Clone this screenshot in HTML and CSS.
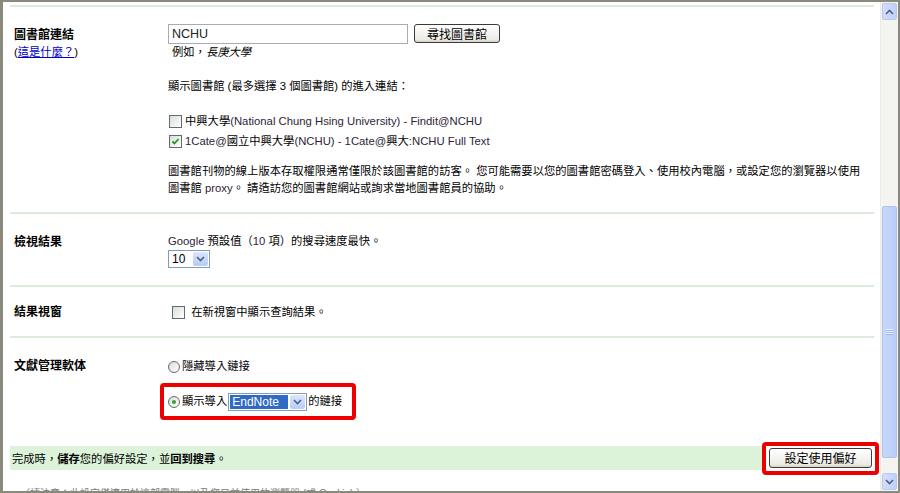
FILE: index.html
```html
<!DOCTYPE html>
<html lang="zh-Hant">
<head>
  <meta charset="UTF-8" />
  <title>偏好設定</title>
  <link rel="stylesheet" href="styles.css">
</head>
<body>
  <div class="window">
    <div class="viewport">
      <div class="prefs">

        <!-- 圖書館連結 -->
        <div class="section library">
          <div class="label">
            <b>圖書館連結</b>
            <div>(<a href="#">這是什麼？</a>)</div>
          </div>
          <div class="field">
            <div class="search-row">
              <input class="text-input" type="text" value="NCHU">
              <button class="btn">尋找圖書館</button>
            </div>
            <div class="example">例如，<i>長庚大學</i></div>
            <div class="hint">顯示圖書館 (最多選擇 3 個圖書館) 的進入連結：</div>
            <div class="choices">
              <div class="choice"><span class="cb"></span><span>中興大學<span class="latin">(National Chung Hsing University) - Findit@NCHU</span></span></div>
              <div class="choice"><span class="cb checked"><svg viewBox="0 0 11 11" width="11" height="11"><polyline points="2.5,5.5 4.5,7.5 8.5,3" fill="none" stroke="#1f9a1f" stroke-width="1.8"/></svg></span><span><span class="latin">1Cate@</span>國立中興大學<span class="latin">(NCHU) - 1Cate@</span>興大<span class="latin">:NCHU Full Text</span></span></div>
            </div>
            <p class="note">圖書館刊物的線上版本存取權限通常僅限於該圖書館的訪客。 您可能需要以您的圖書館密碼登入、使用校內電腦，或設定您的瀏覽器以使用<br>圖書館 <span class="latin">proxy</span>。 請造訪您的圖書館網站或詢求當地圖書館員的協助。</p>
          </div>
        </div>

        <!-- 檢視結果 -->
        <div class="section results">
          <div class="label"><b>檢視結果</b></div>
          <div class="field">
            <div><span class="latin">Google</span> 預設值（<span class="latin">10</span> 項）的搜尋速度最快。</div>
            <div class="select num"><span class="value">10</span><span class="drop"><svg viewBox="0 0 9 6" width="9" height="6"><polyline points="1,1 4.5,4.5 8,1" fill="none" stroke="#4d6185" stroke-width="1.6"/></svg></span></div>
          </div>
        </div>

        <!-- 結果視窗 -->
        <div class="section window-opt">
          <div class="label"><b>結果視窗</b></div>
          <div class="field">
            <div class="choice"><span class="cb"></span><span>&nbsp;在新視窗中顯示查詢結果。</span></div>
          </div>
        </div>

        <!-- 文獻管理軟体 -->
        <div class="section citation">
          <div class="label"><b>文獻管理軟体</b></div>
          <div class="field">
            <div class="choice"><span class="radio"></span><span>隱藏導入鏈接</span></div>
            <div class="marked">
              <span class="radio on"></span><span>顯示導入</span><span class="select endnote"><span class="value"><span class="picked">EndNote</span></span><span class="drop"><svg viewBox="0 0 9 6" width="9" height="6"><polyline points="1,1 4.5,4.5 8,1" fill="none" stroke="#4d6185" stroke-width="1.6"/></svg></span></span><span>的鏈接</span>
            </div>
          </div>
        </div>

        <div class="savebar">
          <div>完成時，<b>儲存</b>您的偏好設定，並<b>回到搜尋</b>。</div>
          <span class="marked-btn"><button class="btn save">設定使用偏好</button></span>
        </div>

        <div class="footnote">（請注意：此設定僅適用於這部電腦，以及您目前使用的瀏覽器 (或 Cookie) ）</div>
      </div>
    </div>

    <div class="scrollbar">
      <div class="arrow"><svg viewBox="0 0 9 6" width="9" height="6"><polyline points="1,5 4.5,1.5 8,5" fill="none" stroke="#4d6185" stroke-width="1.6"/></svg></div>
      <div class="track">
        <div class="thumb"><span class="grip"></span></div>
      </div>
      <div class="arrow"><svg viewBox="0 0 9 6" width="9" height="6"><polyline points="1,1 4.5,4.5 8,1" fill="none" stroke="#4d6185" stroke-width="1.6"/></svg></div>
    </div>
  </div>
</body>
</html>
```

FILE: styles.css
```css
:root {
  --frame: #8a8a7c;
  --rule: #dcecdc;
  --bar: #dcf3da;
  --mark: #ee0000;
  --xp-border: #7f9db9;
  --font: "Liberation Sans", "Noto Sans CJK TC", sans-serif;
}

body {
  margin: 0;
  background: #fff;
  font-family: var(--font);
  font-size: 11.3px;
  color: #000;
}

.latin {
  color: #2e2436;
}

.window {
  box-sizing: border-box;
  width: 900px;
  height: 493px;
  display: flex;
  border-top: 2px solid var(--frame);
  border-left: 3px solid var(--frame);
  border-right: 2px solid var(--frame);
  border-bottom: 2px solid var(--frame);
  overflow: hidden;
}

.viewport {
  flex: 1;
  overflow: hidden;
  padding: 3px 6px 0 7px;
}

.section {
  display: grid;
  grid-template-columns: 154px 1fr;
  border-top: 2px solid var(--rule);
  padding-left: 4px;
  line-height: 17px;
}

.label b {
  font-weight: bold;
  font-size: 12px;
}

.label a {
  color: #0000cc;
}

/* 圖書館連結 */
.library {
  padding-top: 17px;
  padding-bottom: 15px;
}

.library .label {
  padding-top: 3px;
}

.search-row {
  display: flex;
  gap: 6px;
  height: 20px;
}

.text-input {
  box-sizing: border-box;
  width: 240px;
  height: 20px;
  border: 1px solid #a5acb2;
  padding: 0 3px;
  font-family: var(--font);
  font-size: 12.5px;
  color: #222;
}

.btn {
  box-sizing: border-box;
  height: 19px;
  padding: 0 12px;
  font-family: var(--font);
  font-size: 12px;
  border: 1px solid #3b3b3b;
  border-radius: 3px;
  background: linear-gradient(#ffffff, #ecebe6 85%, #d6d0c5);
  color: #000;
}

.example {
  padding-left: 4px;
}

.hint {
  margin-top: 17px;
}

.choices {
  margin-top: 16px;
}

.choice {
  display: flex;
  align-items: center;
  height: 20px;
  gap: 3px;
}

.note {
  margin: 12px 0 0;
  white-space: nowrap;
}

/* 核取方塊與選項 */
.cb {
  box-sizing: border-box;
  width: 13px;
  height: 13px;
  border: 1px solid #5f6b78;
  background: linear-gradient(135deg, #dcdcd6, #ffffff);
  display: inline-flex;
  align-items: center;
  justify-content: center;
  margin-left: 1px;
}

.radio {
  box-sizing: border-box;
  width: 12px;
  height: 12px;
  border: 1px solid #5f6b78;
  border-radius: 50%;
  background: linear-gradient(135deg, #dcdcd6, #ffffff);
  display: inline-flex;
  align-items: center;
  justify-content: center;
  margin-right: 2px;
}

.radio.on::after {
  content: "";
  width: 4px;
  height: 4px;
  border-radius: 50%;
  background: #2fa52f;
}

/* 下拉選單 */
.select {
  box-sizing: border-box;
  display: inline-flex;
  align-items: stretch;
  height: 18px;
  border: 1px solid var(--xp-border);
  background: #fff;
  line-height: 16px;
  font-size: 12px;
}

.select .value {
  flex: 1;
  padding: 0 3px;
}

.select .drop {
  width: 15px;
  margin: 1px;
  border-radius: 2px;
  background: linear-gradient(#dbe6fd, #b7cbf8);
  display: flex;
  align-items: center;
  justify-content: center;
}

.num {
  width: 42px;
}

.endnote {
  width: 79px;
  margin: 0 1px 0 1px;
}

.endnote .value {
  padding: 1px;
}

.picked {
  display: block;
  background: #316ac5;
  color: #fff;
  line-height: 14px;
  padding-left: 2px;
}

/* 檢視結果 */
.results {
  padding-top: 19px;
  padding-bottom: 17px;
}

.results .label {
  padding-top: 1px;
}

/* 結果視窗 */
.window-opt {
  padding-top: 15px;
  padding-bottom: 14px;
}

.window-opt .label {
  padding-top: 2px;
}

.window-opt .cb {
  margin-left: 4px;
}

/* 文獻管理軟体 */
.citation {
  padding-top: 20px;
  padding-bottom: 7px;
}

.citation .choice {
  height: 17px;
  gap: 0;
}

.marked {
  box-sizing: border-box;
  display: inline-flex;
  align-items: center;
  height: 37px;
  margin: 8px 0 0 -8px;
  padding: 0 4px;
  border: 4px solid var(--mark);
  border-radius: 4px;
  width: 196px;
}

/* 儲存列 */
.savebar {
  display: flex;
  justify-content: space-between;
  align-items: center;
  height: 24px;
  margin-top: 19px;
  padding-left: 2px;
  background: var(--bar);
}

.marked-btn {
  box-sizing: border-box;
  height: 33px;
  margin-right: -5px;
  padding: 2px 3px 3px;
  border: 4px solid var(--mark);
  border-radius: 4px;
  background: #fff;
}

.save {
  width: 103px;
  height: 20px;
  padding: 0;
}

.footnote {
  margin-top: 15px;
  padding-left: 10px;
  font-size: 10px;
  color: #777;
  white-space: nowrap;
}

/* 捲軸 */
.scrollbar {
  width: 17px;
  display: flex;
  flex-direction: column;
  background: #f4f4f0;
  border-left: 1px solid #ecece6;
}

.arrow {
  height: 15px;
  margin: 1px;
  border-radius: 2px;
  background: linear-gradient(90deg, #d3defb, #bfd0f9);
  border: 1px solid #b7c8f1;
  display: flex;
  align-items: center;
  justify-content: center;
}

.track {
  flex: 1;
  display: flex;
  flex-direction: column;
  justify-content: flex-end;
  padding: 0 1px 14px;
}

.thumb {
  height: 250px;
  border: 1px solid #aec2f0;
  border-radius: 2px;
  background: linear-gradient(90deg, #c8d8fc, #b9cdfa);
  display: flex;
  align-items: center;
  justify-content: center;
}

.grip {
  width: 7px;
  height: 6px;
  background: repeating-linear-gradient(#eef3ff 0 1px, #9fb5e8 1px 2px);
}
```
